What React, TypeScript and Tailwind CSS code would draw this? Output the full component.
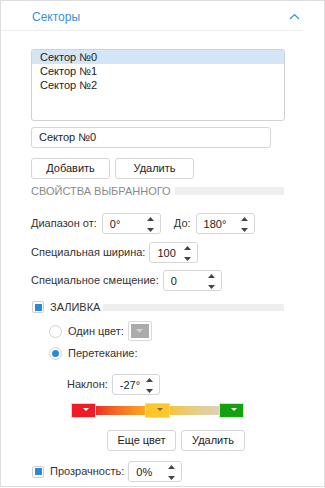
import React from "react";

function Spin({ w, value, ml = "" }: { w: string; value: string; ml?: string }) {
  return (
    <div className={`relative h-[21px] border border-[#d6d6d6] rounded-[3px] bg-white flex items-center pl-[7px] ${w} ${ml}`}>
      <span className="text-[11px] text-[#222] leading-none mt-[2px]">{value}</span>
      <div className="absolute right-[6px] top-[3px] flex flex-col items-center gap-[7px]">
        <svg width="7" height="4" viewBox="0 0 7 4"><path d="M0 4 L3.5 0 L7 4 Z" fill="#444" /></svg>
        <svg width="7" height="4" viewBox="0 0 7 4"><path d="M0 0 L3.5 4 L7 0 Z" fill="#444" /></svg>
      </div>
    </div>
  );
}

function Btn({ w, children }: { w: string; children: React.ReactNode }) {
  return (
    <div className={`h-[21px] border border-[#d6d6d6] rounded-[3px] bg-white flex items-center justify-center text-[#222] ${w}`}>
      {children}
    </div>
  );
}

function Check() {
  return (
    <div className="w-[12px] h-[12px] border border-[#cfcfcf] rounded-[2px] bg-white flex items-center justify-center">
      <div className="w-[7px] h-[7px] bg-[#2a8ad6]" />
    </div>
  );
}

function Swatch({ color, arrow }: { color: string; arrow: string }) {
  return (
    <div className="w-[25px] h-[15px] border border-[#dcdcdc] bg-white p-0 flex-none">
      <div className="w-full h-full flex items-start justify-end pr-[6px] pt-[4px]" style={{ background: color }}>
        <svg width="6" height="3" viewBox="0 0 6 3"><path d="M0 0 L3 3 L6 0 Z" fill={arrow} /></svg>
      </div>
    </div>
  );
}

export default function App() {
  return (
    <div
      className="w-[325px] h-[487px] border border-[#dedede] bg-white text-[11px] text-[#333] overflow-hidden"
      style={{ fontFamily: '"Liberation Sans", Arial, sans-serif' }}
    >
      <div className="h-[30px] mr-[21px] border-b border-[#ececec] flex items-center justify-between pl-[31px] pr-[3px]">
        <span className="text-[12px] text-[#3a8fd8] mt-[2px]">Секторы</span>
        <svg width="11" height="7" viewBox="0 0 11 7" className="mt-[1px]">
          <path d="M1 6 L5.5 1.5 L10 6" stroke="#3a8fd8" strokeWidth="1.2" fill="none" />
        </svg>
      </div>

      <div className="pl-[30px] flex flex-col">
        <div className="mt-[18px] w-[254px] h-[72px] border border-[#cfd3d8] rounded-[3px] bg-white overflow-hidden">
          <div className="h-[14px] bg-[#d4e6f5] pl-[8px] leading-[14px] text-[#222]">Сектор №0</div>
          <div className="h-[14px] pl-[8px] leading-[14px] text-[#222]">Сектор №1</div>
          <div className="h-[14px] pl-[8px] leading-[14px] text-[#222]">Сектор №2</div>
        </div>

        <div className="mt-[6px] w-[240px] h-[21px] border border-[#d6d6d6] rounded-[3px] flex items-center pl-[7px] text-[#222]">
          Сектор №0
        </div>

        <div className="mt-[10px] flex gap-[5px]">
          <Btn w="w-[79px]">Добавить</Btn>
          <Btn w="w-[79px]">Удалить</Btn>
        </div>

        <div className="mt-[5px] h-[14px] flex items-center w-[253px]">
          <span className="text-[#8a8a8a]">СВОЙСТВА ВЫБРАННОГО</span>
          <div className="flex-1 ml-[4px] h-[8px] bg-[#eeeeee]" />
        </div>

        <div className="mt-[15px] flex items-center">
          <span>Диапазон от:</span>
          <Spin w="w-[59px]" value="0°" ml="ml-[5px]" />
          <span className="ml-[13px]">До:</span>
          <Spin w="w-[59px]" value="180°" ml="ml-[5px]" />
        </div>

        <div className="mt-[8px] flex items-center">
          <span>Специальная ширина:</span>
          <Spin w="w-[49px]" value="100" ml="ml-[4px]" />
        </div>

        <div className="mt-[7px] flex items-center">
          <span>Специальное смещение:</span>
          <Spin w="w-[59px]" value="0" ml="ml-[4px]" />
        </div>

        <div className="mt-[10px] h-[12px] flex items-center w-[253px] pl-[1px]">
          <Check />
          <span className="ml-[6px]">ЗАЛИВКА</span>
          <div className="flex-1 ml-[3px] h-[7px] bg-[#eeeeee]" />
        </div>

        <div className="mt-[8px] ml-[18px] flex items-center h-[20px]">
          <div className="w-[13px] h-[13px] rounded-full border border-[#d0d0d0] bg-white" />
          <span className="ml-[6px]">Один цвет:</span>
          <div className="ml-[4px] w-[24px] h-[20px] border border-[#dadada] rounded-[2px] bg-white p-[2px]">
            <div className="w-full h-full bg-[#ababab] flex items-center justify-center">
              <svg width="7" height="4" viewBox="0 0 7 4"><path d="M0 0 L3.5 4 L7 0 Z" fill="#d0d0d0" /></svg>
            </div>
          </div>
        </div>

        <div className="mt-[5px] ml-[18px] flex items-center h-[14px]">
          <div className="w-[13px] h-[13px] rounded-full border border-[#d0d0d0] bg-white flex items-center justify-center">
            <div className="w-[7px] h-[7px] rounded-full bg-[#2a8ad6]" />
          </div>
          <span className="ml-[6px]">Перетекание:</span>
        </div>

        <div className="mt-[14px] ml-[36px] flex items-center">
          <span>Наклон:</span>
          <Spin w="w-[48px]" value="-27°" ml="ml-[4px]" />
        </div>

        <div className="mt-[8px] ml-[40px] flex items-center w-[173px]">
          <Swatch color="#ee1c25" arrow="#ffffff" />
          <div className="flex-1 h-[9px] bg-gradient-to-r from-[#ee2a24] to-[#fca61e]" />
          <Swatch color="#fec62a" arrow="#7a6a40" />
          <div className="flex-1 h-[9px] bg-gradient-to-r from-[#f3c43e] to-[#dcd2b8]" />
          <Swatch color="#13a10e" arrow="#ffffff" />
        </div>

        <div className="mt-[12px] ml-[76px] flex gap-[5px]">
          <Btn w="w-[69px]">Еще цвет</Btn>
          <Btn w="w-[64px]">Удалить</Btn>
        </div>

        <div className="mt-[10px] flex items-center pl-[1px]">
          <Check />
          <span className="ml-[6px]">Прозрачность:</span>
          <Spin w="w-[54px]" value="0%" ml="ml-[4px]" />
        </div>
      </div>
    </div>
  );
}
